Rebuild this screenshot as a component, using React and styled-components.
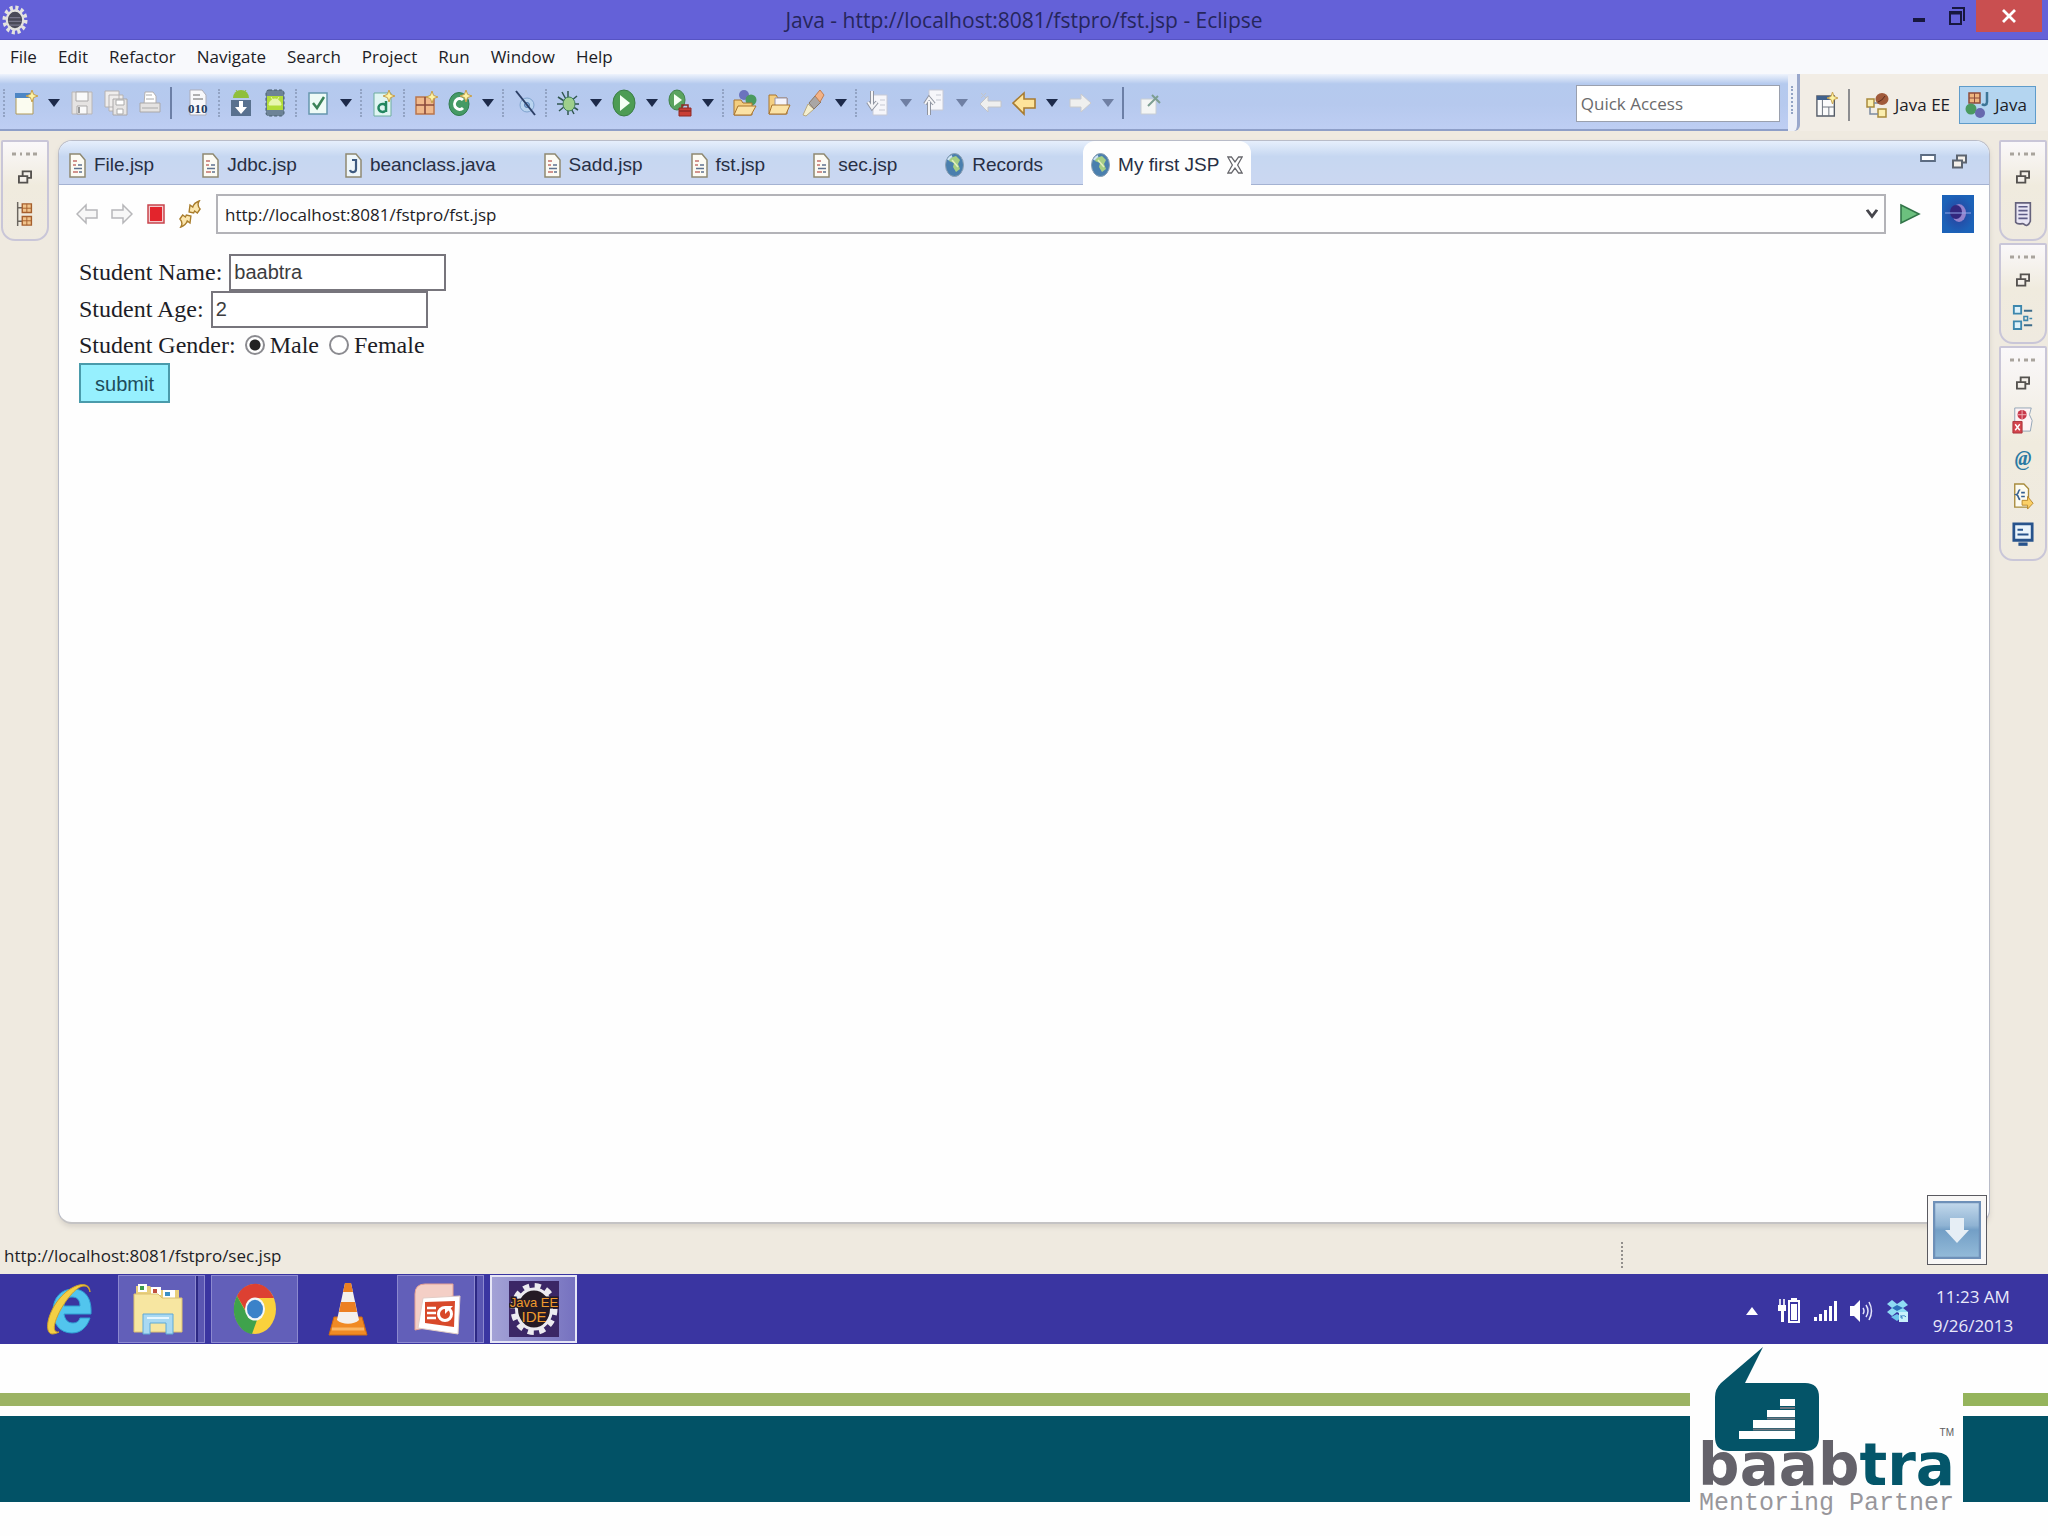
import React from "react";
import styled, { createGlobalStyle } from "styled-components";

const GlobalStyle = createGlobalStyle`
  * { box-sizing: border-box; }
  html, body { margin: 0; padding: 0; background: #fefefe; }
  button, input { font: inherit; color: inherit; margin: 0; }
  button { cursor: pointer; }
`;

const ui = `"Open Sans", "Noto Sans", sans-serif`;

const Page = styled.div`
  min-height: 100vh;
  display: flex;
  flex-direction: column;
  font-family: ${ui};
  font-size: 17px;
  color: #1d1d26;
`;

/* ---------- window chrome ---------- */

const Workbench = styled.div`
  position: relative;
  flex: 1;
  display: flex;
  flex-direction: column;
  background: #efeae0;
`;

const TitleBar = styled.header`
  display: grid;
  grid-template-columns: 160px 1fr 160px;
  align-items: center;
  height: 40px;
  background: #6461d8;
  border-bottom: 1px solid #5653c4;
`;

const AppMark = styled.div`
  display: flex;
  padding-left: 2px;
`;

const Title = styled.h1`
  margin: 0;
  text-align: center;
  font-size: 21px;
  line-height: 28px;
  font-weight: 400;
  color: #26265c;
`;

const WindowButtons = styled.div`
  display: flex;
  align-self: start;
  justify-content: flex-end;
  padding-right: 6px;
`;

const WindowButton = styled.button`
  display: flex;
  align-items: center;
  justify-content: center;
  width: ${(p) => (p.$close ? 66 : 38)}px;
  height: 32px;
  padding: 0;
  border: 0;
  background: ${(p) => (p.$close ? "#c94f50" : "transparent")};
`;

const MenuBar = styled.nav`
  display: flex;
  gap: 21px;
  height: 34px;
  padding: 0 10px;
  background: #f8f9fc;
`;

const MenuItem = styled.button`
  padding: 0;
  border: 0;
  background: none;
  line-height: 34px;
`;

/* ---------- main toolbar ---------- */

const ToolRow = styled.div`
  display: flex;
  height: 57px;
`;

const ToolStrip = styled.div`
  flex: 1;
  display: flex;
  align-items: center;
  padding-top: 3px;
  background: linear-gradient(#eef3fc, #b5caee 18%, #b6c9ee 55%, #becef3);
  border-bottom: 2px solid #8e9fc8;
`;

const ToolButton = styled.button`
  display: flex;
  justify-content: center;
  width: ${(p) => (p.$arrow ? 22 : 34)}px;
  padding: 0;
  border: 0;
  background: none;
`;

const Grip = styled.span`
  width: 2px;
  height: 28px;
  margin: 0 4px 0 3px;
  border-left: 2px dotted #92a3c4;
`;

const Divider = styled.span`
  width: 2px;
  height: 32px;
  margin: ${(p) => (p.$roomy ? "0 14px 0 10px" : "0 9px 0 3px")};
  background: ${(p) => (p.$roomy ? "#8d8d90" : "#6c7fa6")};
`;

const QuickAccess = styled.input`
  width: 204px;
  height: 37px;
  margin-left: auto;
  margin-right: 8px;
  padding: 0 4px;
  border: 1px solid #9aa0ae;
  background: #fff;
  &::placeholder { color: #6a6a6c; opacity: 1; }
`;

const StripEnd = styled.div`
  display: flex;
  width: 12px;
  padding: 12px 0 8px;
  background: #edf0f8;
  border-right: 3px solid #9aa8cc;
  border-bottom-right-radius: 6px;
`;

const Perspectives = styled.div`
  display: flex;
  align-items: center;
  padding: 4px 12px 0 16px;
  background: #f2ede5;
`;

const PerspectiveButton = styled.button`
  display: flex;
  align-items: center;
  gap: 6px;
  height: 38px;
  padding: 0 ${(p) => (p.$bare ? 0 : 8)}px 0 ${(p) => (p.$bare ? 0 : 5)}px;
  margin-right: ${(p) => (p.$bare ? 8 : 0)}px;
  border: 1px solid ${(p) => (p.$on ? "#5f9ccb" : "transparent")};
  background: ${(p) => (p.$on ? "#b4d5f0" : "none")};
`;

/* ---------- body: trim stacks and editor ---------- */

const Body = styled.div`
  flex: 1;
  display: flex;
  gap: 9px;
  padding: 9px 1px 0;
`;

const TrimColumn = styled.aside`
  display: flex;
  flex-direction: column;
  gap: 2px;
  width: 48px;
`;

const TrimStack = styled.div`
  display: flex;
  flex-direction: column;
  align-items: center;
  padding: 10px 0 7px;
  border: 2px solid #c9c6d8;
  border-radius: 2px 2px 14px 14px;
  background: linear-gradient(#faf8fa, #f0ebde 45%, #efeae0);
`;

const TrimButton = styled.button`
  display: flex;
  align-items: center;
  justify-content: center;
  width: 38px;
  height: 38px;
  padding: 3px 0 0;
  border: 0;
  background: none;
`;

const Editor = styled.main`
  flex: 1;
  display: flex;
  flex-direction: column;
  border: 1px solid #b9bcc8;
  border-bottom: 2px solid #c4c3c4;
  border-radius: 14px;
  background: #fefefe;
  overflow: hidden;
  box-shadow: 0 3px 5px #d8d3ca;
`;

const TabBar = styled.div`
  display: flex;
  height: 44px;
  padding-left: 2px;
  background: linear-gradient(#e6effc, #c6d7f1 35%, #cbd7f1);
  box-shadow: inset 0 -1px #a4b2d2;
`;

const Tab = styled.button`
  display: flex;
  align-items: center;
  gap: 8px;
  padding: 4px ${(p) => (p.$on ? 8 : 40)}px 0 8px;
  border: 0;
  border-radius: 12px 12px 0 0;
  background: ${(p) => (p.$on ? "#fefefe" : "none")};
  font: 19px/24px "Liberation Sans", Arial, sans-serif;
  color: #272f45;
`;

const TabTools = styled.div`
  display: flex;
  gap: 16px;
  margin-left: auto;
  padding: 13px 22px 0 0;
`;

const PlainButton = styled.button`
  display: flex;
  padding: 0;
  margin-right: ${(p) => (p.$spaced ? 8 : 0)}px;
  border: 0;
  background: none;
`;

const AddressRow = styled.div`
  display: flex;
  align-items: center;
  gap: 13px;
  padding: 9px 15px 0 17px;
`;

const AddressBox = styled.div`
  flex: 1;
  display: flex;
  align-items: center;
  height: 40px;
  margin-left: 2px;
  padding-right: 6px;
  border: 2px solid #b3b3b8;
  background: #fefefe;
`;

const AddressInput = styled.input`
  flex: 1;
  padding: 0 7px;
  border: 0;
  background: none;
  outline: 0;
`;

const Form = styled.form`
  display: flex;
  flex-direction: column;
  align-items: flex-start;
  padding: 20px;
  font: 24px/34px "Liberation Serif", "Times New Roman", serif;
`;

const Field = styled.div`
  display: flex;
  align-items: center;
  height: ${(p) => (p.$short ? 35 : 37)}px;
`;

const FieldLabel = styled.label`
  padding: 0 7px 2px 0;
`;

const TextBox = styled.input`
  width: 217px;
  height: 37px;
  padding: 0 3px;
  border: 2px solid #77757c;
  background: #fff;
  font: 20px/28px "Liberation Sans", Arial, sans-serif;
  color: #3c3c40;
`;

const Radio = styled.input`
  appearance: none;
  width: 20px;
  height: 20px;
  margin: 0 5px 2px 2px;
  border: 2px solid #8b8b90;
  border-radius: 50%;
  background: #fff;
  &:checked { background: radial-gradient(circle, #222 5px, #fff 6px); }
`;

const Choice = styled.label`
  padding: 0 8px 2px 0;
`;

const Submit = styled.button`
  width: 91px;
  height: 40px;
  padding: 2px 0 0;
  border: 2px solid #4a9bab;
  background: #96f0fe;
  font: 20px/28px "Liberation Sans", Arial, sans-serif;
  color: #1d4d5c;
`;

const StatusBar = styled.footer`
  display: flex;
  align-items: center;
  justify-content: space-between;
  height: 50px;
  padding: 12px 425px 0 4px;
`;

const StatusGrip = styled.span`
  height: 26px;
  border-left: 2px dotted #928f8c;
`;

const DownloadBadge = styled.button`
  position: absolute;
  right: 61px;
  bottom: 9px;
  display: flex;
  padding: 5px;
  border: 1px solid #5a5a60;
  background: #f8f7f6;
`;

/* ---------- taskbar ---------- */

const Taskbar = styled.div`
  display: flex;
  align-items: center;
  justify-content: space-between;
  height: 70px;
  background: #3a35a1;
`;

const TaskList = styled.div`
  display: flex;
  align-items: center;
  gap: 6px;
  padding-left: 25px;
`;

const TaskButton = styled.button`
  display: flex;
  align-items: center;
  justify-content: center;
  width: 87px;
  height: 68px;
  padding: 0 ${(p) => (p.$stacked ? 8 : 0)}px 0 0;
  border: ${(p) => (p.$state === "idle" ? 0 : p.$state === "active" ? 2 : 1)}px solid
    ${(p) => (p.$state === "active" ? "#e6e6f6" : "#8c89cf")};
  background: ${(p) =>
    p.$state === "idle" ? "none" : p.$state === "active" ? "linear-gradient(90deg, #a3a2d6, #7672c0)" : "#625fb9"};
  box-shadow: ${(p) => (p.$stacked ? "inset -6px 0 #5a56b2, inset -8px 0 #2c2884, inset -9px 0 #8c89cf" : "none")};
`;

const Tray = styled.div`
  display: flex;
  align-items: center;
  gap: 13px;
  padding: 4px 35px 0 0;
  color: #e9e9fa;
`;

const Clock = styled.time`
  display: flex;
  flex-direction: column;
  align-items: center;
  width: 80px;
  margin-left: 11px;
  line-height: 29px;
`;

/* ---------- slide footer ---------- */

const Footer = styled.div`
  display: flex;
  height: 192px;
  background: #fefefe;
`;

const Bands = styled.div`
  display: grid;
  grid-template-rows: 13px 86px;
  row-gap: 10px;
  align-content: start;
  flex: ${(p) => (p.$end ? "0 0 85px" : "1")};
  padding-top: 49px;
`;

const Band = styled.div`
  background: ${(p) => p.$color};
`;

const Brand = styled.div`
  display: flex;
  flex-direction: column;
  align-items: center;
  width: 273px;
  padding-top: 3px;
`;

const BrandMark = styled.div`
  display: flex;
  justify-content: space-between;
  align-items: flex-end;
  align-self: stretch;
  padding: 0 9px 0 25px;
`;

const Trade = styled.span`
  padding-bottom: 12px;
  font: 10px/12px "Liberation Sans", Arial, sans-serif;
  color: #5d5d60;
`;

const BrandName = styled.div`
  margin-top: -14px;
  font: bold 58px/56px "DejaVu Sans", sans-serif;
  color: #64626a;
`;

const Accent = styled.span`
  color: #04566a;
`;

const Tagline = styled.div`
  font: 25px/22px "Liberation Mono", "Courier New", monospace;
  color: #98969b;
`;

/* ---------- drawings ---------- */

const Draw = ({ w = 24, h = 28, box, children }) => (
  <svg width={w} height={h} viewBox={box || "0 0 24 28"} fill="none" aria-hidden="true" preserveAspectRatio="none">
    {children}
  </svg>
);

const spark = (x, y) => (
  <path d={`M${x} ${y - 6}l1.6 4.4 4.4 1.6-4.4 1.6L${x} ${y + 6}l-1.6-4.4L${x - 6} ${y}l4.4-1.6z`} fill="#fdf3a4" stroke="#c8a04c" />
);

const tools = {
  fresh: <><path d="M2 5h17v20H2z" fill="#fbfcf0" stroke="#b09a58" /><path d="M1 4h17v5H1z" fill="#4d86c4" />{spark(18, 7)}</>,
  save: <><path d="M2 3h20v22H2z" fill="#e5e3e2" stroke="#b9b6b6" /><path d="M6 3h12v9H6zM7 17h10v8H7z" fill="#fafafa" stroke="#aaa8a8" /><path d="M9 18v6" stroke="#999" strokeWidth="2" /></>,
  saveAll: <><path d="M1 2h14v16H1zM5 6h14v16H5z" fill="#efedec" stroke="#b5b2b2" /><path d="M9 10h14v16H9z" fill="#e7e5e4" stroke="#aaa8a8" /><path d="M12 11h8v5h-8zM13 20h6v5h-6z" fill="#fff" stroke="#aaa" /></>,
  print: <><path d="M7 3h8l3 4v8H6z" fill="#fff" stroke="#b3b0b0" /><path d="M2 14h20v9H2z" fill="#e4e2e1" stroke="#aaa8a8" /><path d="M8 6h6M8 10h8M4 19h16" stroke="#aaa" /></>,
  binary: <><path d="M4 1h12l4 5v20H4z" fill="#f8f8fb" stroke="#adadb8" /><path d="M7 6h7M7 10h10" stroke="#666" /><text x="2" y="24" fontSize="13" fontWeight="bold" fontFamily="Liberation Serif, serif" fill="#23395d">010</text></>,
  androidGet: <><path d="M4 9a8 8 0 0116 0z" fill="#8fbf3c" /><path d="M7 1l2 3M17 1l-2 3" stroke="#8fbf3c" /><path d="M2 11h20v16H2z" fill="#59718f" /><path d="M10 12h4v6h4l-6 7-6-7h4z" fill="#fff" /></>,
  phone: <><rect x="3" y="1" width="18" height="26" rx="3" fill="#6d8396" stroke="#465c6c" strokeDasharray="3 2" /><path d="M4 7h16v14H4z" fill="#b2dc3a" /><path d="M6 16a6 6 0 0112 0zM8 8l2 3M16 8l-2 3" fill="#e8f6b0" stroke="#e8f6b0" /></>,
  check: <><path d="M3 4h18v21H3z" fill="#eefbf6" stroke="#6697ad" strokeWidth="1.500" /><path d="M7 14l4 5 7-11" stroke="#3b8258" strokeWidth="2.500" /></>,
  junit: <><path d="M3 4h17v23H3z" fill="#e0f5f2" stroke="#6fae9f" /><path d="M15 12v11M15 17a4 4 0 10-1 5" stroke="#23865f" strokeWidth="2.500" />{spark(18, 7)}</>,
  pack: <><path d="M2 8h18v17H2z" fill="#f0b98c" stroke="#b9764c" strokeWidth="1.500" /><path d="M11 8v17M2 16h18" stroke="#8b4b3c" strokeWidth="1.600" />{spark(18, 8)}</>,
  klass: <><ellipse cx="11" cy="15" rx="10" ry="11.500" fill="#459a65" stroke="#307c4e" /><path d="M15 11a5 5.500 0 100 8" stroke="#fff" strokeWidth="3" />{spark(18, 7)}</>,
  skip: <><circle cx="14" cy="16" r="7" fill="#b9d4f0" stroke="#7fa3ce" /><circle cx="14" cy="16" r="2.500" fill="#8fb0d8" stroke="#527fb4" /><path d="M3 2l19 24" stroke="#2c3f66" strokeWidth="2" /></>,
  bug: <><path d="M12 2v24M2 8l20 13M21 7L3 22M1 15h22M6 3l12 22" stroke="#30564f" strokeWidth="1.500" /><ellipse cx="13" cy="15" rx="6" ry="7" fill="#9ecf8b" stroke="#3f7c5c" /></>,
  run: <><ellipse cx="12" cy="14" rx="11" ry="13" fill="#4d9c54" stroke="#3a7d45" /><path d="M8 6l10 8-10 8z" fill="#f6fff4" /></>,
  external: <><ellipse cx="9" cy="11" rx="8" ry="10" fill="#5aa35e" stroke="#3f8248" /><path d="M6 5l8 6-8 6z" fill="#f6fff4" /><path d="M11 19h12v8H11z" fill="#c93f36" stroke="#8f2a26" /><path d="M14 19v-3h6v3M11 22h12" stroke="#8f2a26" strokeWidth="1.500" /></>,
  openType: <><circle cx="11" cy="6" r="5" fill="#6b73bd" /><circle cx="18" cy="11" r="5.500" fill="#4a9a5f" /><path d="M1 11h7l2 3h9v12H1z" fill="#f3ce80" stroke="#a9742e" /><path d="M1 26l4-9h18l-5 9z" fill="#fbe2a5" stroke="#a9742e" /></>,
  openRes: <><path d="M2 6h7l2 3h9v16H2z" fill="#f3ce80" stroke="#a9742e" /><path d="M8 9h12v9H8z" fill="#f5f4fb" stroke="#9a94a8" /><path d="M2 25l3-9h18l-4 9z" fill="#fbe2a5" stroke="#a9742e" /></>,
  brush: <><path d="M2 26l5-11 6 5-8 7z" fill="#f5efce" stroke="#b7a983" /><path d="M8 14l6-7 6 6-7 7z" fill="#a9a6a5" stroke="#8a7763" /><path d="M14 7l5-6 4 5-4 7z" fill="#f2b286" stroke="#c07e52" /></>,
  nextNote: <><path d="M7 6h14v20H7z" fill="#f6f6fa" stroke="#c7cad6" /><path d="M6 2v15M2 13l4 6 5-6" stroke="#8f94a0" strokeWidth="4" /><path d="M6 2v15M2 13l4 6 5-6" stroke="#f4f4f6" strokeWidth="2" /><path d="M14 11h5M14 16h5M13 21h6" stroke="#c5c8d2" /></>,
  prevNote: <><path d="M7 1h14v20H7z" fill="#f6f6fa" stroke="#c7cad6" /><path d="M7 26V12M3 15l4-6 5 6" stroke="#8f94a0" strokeWidth="4" /><path d="M7 26V12M3 15l4-6 5 6" stroke="#f4f4f6" strokeWidth="2" /><path d="M14 6h5M14 11h5" stroke="#c5c8d2" /></>,
  lastEdit: <path d="M2 15l8-8v5h13v6H10v5zM3 4l5 5M8 4L3 9" fill="#efefee" stroke="#c2c4c8" />,
  back: <path d="M1 14L12 4v6h11v9H12v6z" fill="#fde39a" stroke="#a87b30" strokeWidth="1.600" />,
  forward: <path d="M23 14L13 5v5H2v8h11v5z" fill="#efefee" stroke="#c9cacd" />,
  pin: <><path d="M3 10h15v15H3z" fill="#f3f5f4" stroke="#c8ced4" /><path d="M10 17l10-10M14 6l8 8" stroke="#7d9e92" strokeWidth="2" /></>,
};

const toolOrder =
  "| fresh v save saveAll print / binary | androidGet phone | check v | junit | pack klass v | skip | bug v run v external v | openType openRes brush v | nextNote w prevNote w lastEdit back v forward w / pin".split(" ");

const RestoreIcon = ({ size = 15, line = "#55524f" }) => (
  <Draw w={size} h={size} box="0 0 15 15">
    <path d="M5 1.500h9v7H5z" stroke={line} strokeWidth="2" fill="#f4f0ea" />
    <path d="M1 6.500h9v7H1z" stroke={line} strokeWidth="2" fill="#f4f0ea" />
  </Draw>
);

const PageIcon = () => (
  <Draw w={17} h={25} box="0 0 17 25">
    <path d="M1 1h10l5 6v17H1z" fill="#fcfbf4" stroke="#8f8971" strokeWidth="1.500" />
    <path d="M4 8h4M4 12h3M4 19h5" stroke="#c4716c" strokeWidth="1.500" />
    <path d="M9 12h4M5 15.500h8M10 19h3" stroke="#5f7390" strokeWidth="1.500" />
  </Draw>
);

const JavaFileIcon = () => (
  <Draw w={17} h={25} box="0 0 17 25">
    <path d="M1 1h10l5 6v17H1z" fill="#eef6fa" stroke="#8f8971" strokeWidth="1.500" />
    <path d="M7 7h4v9c0 4-5 4-6 1" stroke="#3d5a80" strokeWidth="2.200" />
  </Draw>
);

const GlobeIcon = () => (
  <Draw w={19} h={24} box="0 0 19 24">
    <ellipse cx="9.500" cy="12" rx="9" ry="11.500" fill="#4a7fae" stroke="#8a9fb2" />
    <path d="M5 5l6-2 4 4-2 4 2 5-4 3-3-5 1-4-5-2z" fill="#a6cf84" />
    <path d="M7 7l6 7" stroke="#e4efc0" strokeWidth="1.500" />
    <path d="M3 7a9 9 0 014-4" stroke="#cfe4f3" strokeWidth="2" />
  </Draw>
);

const TrimDots = () => (
  <Draw w={26} h={4} box="0 0 26 4">
    <path d="M0 2h4M8 2h2M14 2h4M21 2h4" stroke="#a9a49d" strokeWidth="3" />
  </Draw>
);

const trims = {
  tree: <><path d="M4 1v25M4 7h5M4 21h5" stroke="#6b6660" strokeWidth="1.600" /><path d="M9 3h10v9H9zM9 16h10v9H9z" fill="#f1c48c" stroke="#a65f2d" strokeWidth="1.500" /><path d="M14 3v9M9 7.500h10M14 16v9M9 20.500h10" stroke="#a65f2d" /></>,
  tasks: <><path d="M4 2h16v19c-2 5-5 5-7 3s-6 2-9-2z" fill="#e9e6f4" stroke="#65627c" strokeWidth="1.800" /><path d="M7 6h10M7 10h10M7 14h10M7 18h10" stroke="#5d5b86" strokeWidth="1.600" /></>,
  outline: <><path d="M2 2h8v8H2zM2 18h8v8H2z" fill="#dff2fa" stroke="#3d87ad" strokeWidth="2" /><path d="M13 7h9M13 22h9" stroke="#3d6c8a" strokeWidth="2" /><path d="M13 13h4v4h-4zM19 15h3" stroke="#3d87ad" strokeWidth="1.600" /></>,
  problems: <><path d="M3 1h18l-2 7 3 6-2 11H3z" fill="#fdf3f4" stroke="#8fa3b5" /><circle cx="11" cy="8" r="5" fill="#c8374a" /><path d="M11 3v10M6 8h10" stroke="#f0b3b9" /><path d="M1 15h10v12H1z" fill="#d4454d" stroke="#a93039" /><path d="M3.500 18l5 6M8.500 18l-5 6" stroke="#fff" strokeWidth="1.600" /></>,
  declaration: <><path d="M3 1h10l5 5v19H3z" fill="#fdfbf0" stroke="#a88c3d" strokeWidth="1.500" /><path d="M9 7c-3 0-1 4-4 5 3 1 1 5 4 5M10 10h4M10 14h4" stroke="#345f92" strokeWidth="1.800" /><path d="M11 18h6v-4l6 7-6 6v-4h-6z" fill="#fbd067" stroke="#b8862b" /></>,
  consoleView: <><path d="M2 3h20v17H2z" fill="#eaf4fb" stroke="#27538c" strokeWidth="3" /><path d="M6 9h6M6 14h12" stroke="#27538c" strokeWidth="2" /><path d="M7 24h10" stroke="#27538c" strokeWidth="3.500" /></>,
};

const Stack = ({ views }) => (
  <TrimStack>
    <TrimDots />
    <TrimButton aria-label="Restore"><RestoreIcon size={14} /></TrimButton>
    {views.map((v) => (
      <TrimButton key={v} aria-label={v}>
        {v === "javadoc" ? (
          <Draw w={24} h={24} box="0 0 24 24">
            <text x="12" y="18" textAnchor="middle" fontSize="20" fontWeight="bold" fontStyle="italic" fontFamily="Liberation Serif, serif" fill="#2b7aa3">@</text>
          </Draw>
        ) : (
          <Draw w={22} h={27}>{trims[v]}</Draw>
        )}
      </TrimButton>
    ))}
  </TrimStack>
);

const Gear = ({ w, h, rim, core }) => (
  <Draw w={w} h={h} box="-12 -12 24 24">
    <circle r="9.800" stroke={rim} strokeWidth="3.500" strokeDasharray="2.800 2.330" />
    <circle r="7.600" fill={core} stroke={rim} strokeWidth="2" />
    <path d="M-5-2h10M-6 1h12M-5 4h10" stroke="#77768a" />
  </Draw>
);

const ExplorerIcon = () => (
  <Draw w={50} h={54} box="0 0 50 54">
    <path d="M3 4h14l3 4h26v40H3z" fill="#e9cf7c" />
    <path d="M5 2h9v8H5z" fill="#fff" /><path d="M7 4h4v4H7z" fill="#3e9b4b" />
    <path d="M18 5h10v8H18z" fill="#fff" /><path d="M20 7h4v4h-4z" fill="#c1503f" />
    <path d="M30 8h12v8H30z" fill="#fff" /><path d="M32 10h5v4h-5z" fill="#3a8fc7" />
    <path d="M1 12h24l4 4h20v34H1z" fill="#f7e6a1" stroke="#dcc070" />
    <path d="M10 32h30v20h-7V41H17v11h-7z" fill="#a9d9f2" stroke="#5ea9d6" />
    <path d="M14 36h22" stroke="#e8f7ff" strokeWidth="2" />
  </Draw>
);

const ChromeIcon = () => (
  <Draw w={44} h={52} box="0 0 44 52">
    <ellipse cx="22" cy="26" rx="21" ry="25" fill="#fad13c" />
    <path d="M4 13A21 25 0 0141 15H22L14 30z" fill="#dd4032" />
    <path d="M4 13l10 18 10 6-5 14A21 25 0 014 13z" fill="#3fa24c" />
    <ellipse cx="22" cy="26" rx="10" ry="11.500" fill="#f3f7f9" />
    <ellipse cx="22" cy="26" rx="8" ry="9.300" fill="#3a82c9" />
  </Draw>
);

const IeIcon = () => (
  <Draw w={46} h={54} box="0 0 46 54">
    <path d="M44 36c-3 9-9 15-18 15C14 51 7 42 7 29S15 7 27 7s19 9 18 25H18c1 6 4 9 9 9 4 0 6-2 7-5zM18 24h16c0-6-3-9-8-9s-8 4-8 9z" fill="#52c5ee" stroke="#2f9fd4" fillRule="evenodd" />
    <path d="M44 10C44-2 27 1 14 16S-2 51 6 52c3 0 5-1 7-2-5 1-7-4-1-17S30 4 38 4c4 0 5 3 6 6z" fill="#f4cf45" stroke="#cda02b" />
  </Draw>
);

const VlcIcon = () => (
  <Draw w={40} h={54} box="0 0 40 54">
    <path d="M6 35h28l5 18H1z" fill="#f08a24" stroke="#cf6a12" />
    <path d="M17 1h6l8 37c-5 5-17 5-22 0z" fill="#f4f0ec" />
    <path d="M17 1h6l2 9H15zM13 20h14l2 10H11z" fill="#ec7f22" />
    <path d="M4 47h32" stroke="#fbb765" strokeWidth="3" />
  </Draw>
);

const PowerPointIcon = () => (
  <Draw w={48} h={54} box="0 0 48 54">
    <path d="M2 12Q2 2 12 2h28v12L12 20v26L2 48z" fill="#f4cfc6" stroke="#e6a294" />
    <path d="M10 16l37-2-2 38-40-6z" fill="#fff" stroke="#e3cdc6" />
    <path d="M12 20l30-1-1 26-29-4z" fill="#d8492a" />
    <path d="M14 26h9M14 31h9M14 36h9" stroke="#fff" strokeWidth="2.500" />
    <circle cx="32" cy="32" r="6.500" stroke="#fff" strokeWidth="3" /><path d="M32 32v-8h8z" fill="#fff" />
  </Draw>
);

const EclipseTaskIcon = () => (
  <Draw w={50} h={56} box="0 0 50 56">
    <path d="M0 0h50v56H0z" fill="#3b2766" />
    <ellipse cx="25" cy="28" rx="20.500" ry="23" stroke="#ecebf0" strokeWidth="6" strokeDasharray="6 5.400" />
    <ellipse cx="25" cy="28" rx="17.500" ry="20" fill="#241a24" stroke="#ecebf0" strokeWidth="3" />
    <text x="25" y="26" textAnchor="middle" fontSize="13" fontFamily="Liberation Sans, sans-serif" fill="#ee9a2e" stroke="#241a24" strokeWidth="3" paintOrder="stroke">Java EE</text>
    <text x="25" y="41" textAnchor="middle" fontSize="15" fontFamily="Liberation Sans, sans-serif" fill="#ee9a2e">IDE</text>
  </Draw>
);

const tabs = [
  ["File.jsp", "page"], ["Jdbc.jsp", "page"], ["beanclass.java", "java"], ["Sadd.jsp", "page"],
  ["fst.jsp", "page"], ["sec.jsp", "page"], ["Records", "globe"], ["My first JSP", "globe"],
];
const tabIcon = { page: <PageIcon />, java: <JavaFileIcon />, globe: <GlobeIcon /> };

export default function App() {
  return (
    <Page>
      <GlobalStyle />
      <Workbench>
        <TitleBar>
          <AppMark><Gear w={26} h={30} rim="#e4e3df" core="#4a4a58" /></AppMark>
          <Title>Java - http://localhost:8081/fstpro/fst.jsp - Eclipse</Title>
          <WindowButtons>
            <WindowButton aria-label="Minimize"><Draw w={12} h={14} box="0 0 12 14"><path d="M0 11h12" stroke="#17173f" strokeWidth="4" /></Draw></WindowButton>
            <WindowButton aria-label="Restore"><Draw w={16} h={18} box="0 0 16 18"><path d="M3 1h12v13M1 5h11v12H1z" stroke="#17173f" strokeWidth="2" /><path d="M1 6h11" stroke="#17173f" strokeWidth="3" /></Draw></WindowButton>
            <WindowButton $close aria-label="Close"><Draw w={14} h={14} box="0 0 14 14"><path d="M1 1l12 12M13 1L1 13" stroke="#fff" strokeWidth="2.800" /></Draw></WindowButton>
          </WindowButtons>
        </TitleBar>

        <MenuBar>
          {["File", "Edit", "Refactor", "Navigate", "Search", "Project", "Run", "Window", "Help"].map((m) => (
            <MenuItem key={m}>{m}</MenuItem>
          ))}
        </MenuBar>

        <ToolRow>
          <ToolStrip>
            {toolOrder.map((t, i) => {
              if (t === "|") return <Grip key={i} />;
              if (t === "/") return <Divider key={i} />;
              if (t === "v" || t === "w")
                return (
                  <ToolButton key={i} $arrow aria-label="More">
                    <Draw w={12} h={8} box="0 0 12 8"><path d="M0 0h12L6 8z" fill={t === "v" ? "#1d2a4a" : "#6f7fa3"} /></Draw>
                  </ToolButton>
                );
              return <ToolButton key={i} aria-label={t}><Draw>{tools[t]}</Draw></ToolButton>;
            })}
            <QuickAccess placeholder="Quick Access" aria-label="Quick Access" />
          </ToolStrip>
          <StripEnd><Grip /></StripEnd>
          <Perspectives>
            <PlainButton aria-label="Open Perspective">
              <Draw w={22} h={28}><path d="M1 5h19v20H1z" fill="#fbfbfb" stroke="#555c68" strokeWidth="1.500" /><path d="M1 7h19" stroke="#41618c" strokeWidth="4" /><path d="M7 9v16M7 16h13M14 16v9" stroke="#6b717c" />{spark(18, 7)}</Draw>
            </PlainButton>
            <Divider $roomy />
            <PerspectiveButton $bare>
              <Draw w={24} h={28}><path d="M2 8h7v8H2zM13 18h8v8h-8z" fill="#fbeeae" stroke="#a98a3c" strokeWidth="1.500" /><path d="M5 16v7h8M9 12h5" stroke="#7c8ba0" strokeWidth="1.500" /><ellipse cx="17" cy="8" rx="6.500" ry="6" fill="#a05a3b" /><path d="M13 11q4-1 7-6" stroke="#5b2c1c" /></Draw>
              Java EE
            </PerspectiveButton>
            <PerspectiveButton $on>
              <Draw w={24} h={28}><path d="M4 2h11v10H4z" fill="#edb57e" stroke="#8d4b3a" strokeWidth="1.500" /><path d="M9.500 2v10M4 7h11" stroke="#8d4b3a" /><circle cx="6" cy="18" r="5.500" fill="#4a9a5f" /><circle cx="15" cy="22" r="5" fill="#6769ae" /><path d="M22 1v10c0 3-3 4-5 2" stroke="#3c7596" strokeWidth="2.500" /></Draw>
              Java
            </PerspectiveButton>
          </Perspectives>
        </ToolRow>

        <Body>
          <TrimColumn><Stack views={["tree"]} /></TrimColumn>
          <Editor>
            <TabBar>
              {tabs.map(([name, kind], i) => (
                <Tab key={name} $on={i === 7}>
                  {tabIcon[kind]}
                  <span>{name}</span>
                  {i === 7 && (
                    <Draw w={16} h={18} box="0 0 18 18"><path d="M1 1h4l4 5 4-5h4l-5 8 5 8h-4l-4-5-4 5H1l5-8z" fill="#fff" stroke="#67676c" strokeWidth="1.400" /></Draw>
                  )}
                </Tab>
              ))}
              <TabTools>
                <PlainButton aria-label="Minimize"><Draw w={16} h={9} box="0 0 16 9"><path d="M1 1h14v6H1z" fill="#fff" stroke="#5c6c82" strokeWidth="1.800" /></Draw></PlainButton>
                <PlainButton aria-label="Restore"><RestoreIcon size={15} line="#5c6470" /></PlainButton>
              </TabTools>
            </TabBar>

            <AddressRow>
              <PlainButton aria-label="Back"><Draw w={22} h={22} box="0 0 22 22"><path d="M1 11L10 2v5h11v8H10v5z" fill="#f7f7f7" stroke="#b7b7ba" strokeWidth="1.500" /></Draw></PlainButton>
              <PlainButton aria-label="Forward"><Draw w={22} h={22} box="0 0 22 22"><path d="M21 11l-9-9v5H1v8h11v5z" fill="#f7f7f7" stroke="#b7b7ba" strokeWidth="1.500" /></Draw></PlainButton>
              <PlainButton aria-label="Stop"><Draw w={20} h={22} box="0 0 20 22"><path d="M2 2h16v18H2z" fill="#f3c9cc" stroke="#c8444c" strokeWidth="1.500" /><path d="M4 4h12v14H4z" fill="#e3242c" /></Draw></PlainButton>
              <PlainButton aria-label="Refresh"><Draw w={22} h={28}><path d="M11 12l1-7 3 2c1-3 4-5 7-6-2 3-1 6 1 8l-3 4-3-2-1 2zM13 16l-1 7-3-2c-1 3-4 5-7 6 2-3 1-6-1-8l3-4 3 2 1-2z" fill="#fbe6ae" stroke="#a97d2c" strokeWidth="1.500" /></Draw></PlainButton>
              <AddressBox>
                <AddressInput aria-label="Address" defaultValue="http://localhost:8081/fstpro/fst.jsp" />
                <PlainButton aria-label="Show history"><Draw w={12} h={10} box="0 0 12 12"><path d="M1 1l5 8 5-8" stroke="#46464c" strokeWidth="3" /></Draw></PlainButton>
              </AddressBox>
              <PlainButton $spaced aria-label="Go"><Draw w={22} h={22} box="0 0 22 22"><path d="M2 2l18 9-18 9z" fill="#6cc07e" stroke="#33764a" strokeWidth="1.600" /></Draw></PlainButton>
              <PlainButton aria-label="Eclipse home">
                <Draw w={32} h={38} box="0 0 32 38">
                  <defs><radialGradient id="glow"><stop offset="0" stopColor="#2a3f9c" /><stop offset="1" stopColor="#1c62b8" /></radialGradient></defs>
                  <path d="M0 0h32v38H0z" fill="url(#glow)" />
                  <ellipse cx="17" cy="18" rx="7" ry="9" fill="#9382cc" /><ellipse cx="14" cy="17" rx="6" ry="7" fill="#33277e" />
                  <path d="M3 18h26" stroke="#8fa4e6" />
                </Draw>
              </PlainButton>
            </AddressRow>

            <Form onSubmit={(e) => e.preventDefault()}>
              <Field>
                <FieldLabel htmlFor="name">Student Name:</FieldLabel>
                <TextBox id="name" defaultValue="baabtra" />
              </Field>
              <Field>
                <FieldLabel htmlFor="age">Student Age:</FieldLabel>
                <TextBox id="age" defaultValue="2" />
              </Field>
              <Field $short role="radiogroup" aria-labelledby="gender">
                <FieldLabel as="span" id="gender">Student Gender:</FieldLabel>
                <Radio type="radio" name="gender" id="male" defaultChecked /><Choice htmlFor="male">Male</Choice>
                <Radio type="radio" name="gender" id="female" /><Choice htmlFor="female">Female</Choice>
              </Field>
              <Submit type="submit">submit</Submit>
            </Form>
          </Editor>
          <TrimColumn>
            <Stack views={["tasks"]} />
            <Stack views={["outline"]} />
            <Stack views={["problems", "javadoc", "declaration", "consoleView"]} />
          </TrimColumn>
        </Body>

        <StatusBar>
          <span>http://localhost:8081/fstpro/sec.jsp</span>
          <StatusGrip />
        </StatusBar>
        <DownloadBadge aria-label="Downloads">
          <Draw w={48} h={58} box="0 0 48 58">
            <defs><linearGradient id="sky" x1="0" y1="0" x2="0" y2="1"><stop offset="0" stopColor="#c3d9ec" /><stop offset=".42" stopColor="#8fb3d3" /><stop offset=".5" stopColor="#739fc6" /><stop offset="1" stopColor="#94bbd9" /></linearGradient></defs>
            <path d="M1 1h46v56H1z" fill="url(#sky)" stroke="#6e90b8" strokeWidth="2.500" />
            <path d="M17 17h14v12h5L24 42 12 29h5z" fill="#e6eef5" />
          </Draw>
        </DownloadBadge>
      </Workbench>

      <Taskbar>
        <TaskList>
          <TaskButton $state="idle" aria-label="Internet Explorer"><IeIcon /></TaskButton>
          <TaskButton $state="open" $stacked aria-label="File Explorer"><ExplorerIcon /></TaskButton>
          <TaskButton $state="open" aria-label="Chrome"><ChromeIcon /></TaskButton>
          <TaskButton $state="idle" aria-label="VLC"><VlcIcon /></TaskButton>
          <TaskButton $state="open" $stacked aria-label="PowerPoint"><PowerPointIcon /></TaskButton>
          <TaskButton $state="active" aria-label="Eclipse"><EclipseTaskIcon /></TaskButton>
        </TaskList>
        <Tray>
          <Draw w={24} h={8} box="0 0 24 8"><path d="M5 8h12l-6-8z" fill="#fff" /></Draw>
          <Draw w={23} h={26} box="0 0 23 26"><path d="M2 1v6M6 1v6" stroke="#fff" strokeWidth="1.600" /><path d="M0 7h8v6H6v11H3V13H0z" fill="#fff" /><path d="M11 3h10v21H11z" stroke="#fff" strokeWidth="2" /><path d="M13 6h6v16h-6zM13 0h6v3h-6z" fill="#fff" /></Draw>
          <Draw w={23} h={20} box="0 0 23 20"><path d="M0 16h3v4H0zM5 13h3v7H5zM10 9h3v11h-3zM15 5h3v15h-3zM20 0h3v20h-3z" fill="#fff" /></Draw>
          <Draw w={23} h={24} box="0 0 23 24"><path d="M0 7h4l6-6v22l-6-6H0z" fill="#fff" /><path d="M13 9q2 3 0 6M16 6q4 6 0 12M19 3q5 9 0 18" stroke="#e4e4fa" strokeWidth="1.500" /></Draw>
          <Draw w={23} h={24} box="0 0 23 24"><path d="M6 1l5 4 6-4 5 5-5 3 5 4-5 4-6-4-5 4-5-4 5-4-5-4z" fill="#8fdcf4" /><path d="M6 9l5-3 6 3-6 3z" fill="#2c72ba" /><path d="M5 18l6-3 5 3-5 4z" fill="#6dc5ec" /><path d="M13 13h9v10h-9z" fill="#c8f1fb" /><path d="M15 18a3 3 0 015 0M15 16v3h2" stroke="#3b83c4" /></Draw>
          <Clock dateTime="2013-09-26T11:23"><span>11:23 AM</span><span>9/26/2013</span></Clock>
        </Tray>
      </Taskbar>

      <Footer>
        <Bands><Band $color="#9cb364" /><Band $color="#025266" /></Bands>
        <Brand>
          <BrandMark>
            <Draw w={104} h={104} box="0 0 104 104">
              <path d="M0 50Q0 42 6 36L48 0 30 36h60q14 0 14 14v40q0 14-14 14H14Q0 104 0 90z" fill="#045468" />
              <path d="M65 52h15v7H65zM52 63h28v7H52zM38 73h42v8H38zM24 84h56v8H24z" fill="#fff" />
              <path d="M65 61h15M52 71.500h28M38 82.500h42" stroke="#6f7680" strokeWidth="2" />
            </Draw>
            <Trade>TM</Trade>
          </BrandMark>
          <BrandName>baab<Accent>tra</Accent></BrandName>
          <Tagline>Mentoring Partner</Tagline>
        </Brand>
        <Bands $end><Band $color="#95b45c" /><Band $color="#025266" /></Bands>
      </Footer>
    </Page>
  );
}
